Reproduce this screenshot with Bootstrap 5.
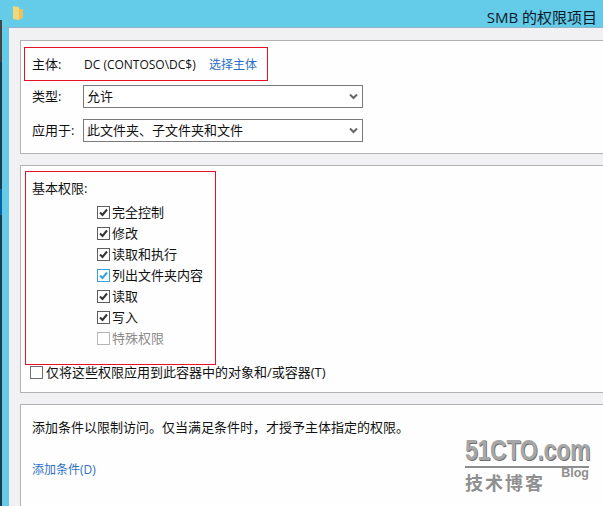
<!DOCTYPE html>
<html lang="zh"><head><meta charset="utf-8">
<link href="https://cdn.jsdelivr.net/npm/bootstrap@5.3.0/dist/css/bootstrap.min.css" rel="stylesheet">
<style>
html,body{height:506px;overflow:hidden}
body{background:#f1f0f2;color:#111;font:13px/17px "Open Sans","Noto Sans CJK SC",sans-serif}
.frame{height:506px;width:603px;position:relative;overflow:hidden;background:#64cbe9}
.edge{width:2px;flex:none;background:linear-gradient(#64cbe9 0 20px,#444 20px 62px,#1d3c50 62px 189px,#0a64a8 189px 215px,#1d3c50 215px)}
.rest{width:601px;flex:none}
.titlebar{height:28px;padding:5px 6px 0 10px;border-bottom:1px solid #8fb6c9}
.ttl{font-size:15px;line-height:24px;color:#0c1a2a}
.inner{margin-left:7px;height:478px;background:#f1f0f2;padding:12px 0 0 11px}
.pane{background:#fdfefd;border:1px solid #b2b2b2;border-right:0;margin-bottom:11px}
.p1{height:114px;padding:6px 0 0 3px}
.p2{height:228px;padding:5px 0 0 4px}
.p3{height:120px;padding:14px 0 0 11px}
.redbox{border:1px solid #e81123}
.rb1{width:244px;height:34px;padding-left:7px;white-space:nowrap}
.rb2{width:191px;height:194px;padding:8px 0 0 6px}
.lab{width:52px;white-space:nowrap}
.rb1 .who{font-size:12px;width:125px}
.lnk{color:#2d6fc7;text-decoration:none;font-size:12px}
.frow{height:23px;margin-top:4px;padding-left:8px}
.frow .lab{width:51px}
.frow + .frow{margin-top:11px}
.dd{width:280px;height:23px;border:1px solid #7a7a7a;padding:0 4px 1px 3px;background:#fff}
.perm{height:21px;padding-left:65px;gap:2px}
.perms{margin-top:5px}
.cb{width:13px;height:13px;border:1px solid #5e5e5e;background:#fff;flex:none}
.cb.off{border-color:#b5b5b5}
.cb.big{border-color:#6e6e6e}
.cb.blue{border-color:#35a3dd}
.muted{color:#8c8c8c}
.only{margin:0 0 0 5px;gap:3px;height:15px}
.gapt{margin-top:25px}
.mark1{position:absolute;left:465px;top:435px;width:124px;color:#a6a6a6;line-height:1}
.mk-a{font:700 30px/30px "Liberation Sans",sans-serif;letter-spacing:-.4px;height:31px;text-shadow:1px 1px 0 #6f6f6f;white-space:nowrap;transform:scaleX(.77);transform-origin:left top}
.mk-rule{height:2px;background:#8d8d8d}
.mk-b{font:700 18px/22px "Noto Sans CJK SC",sans-serif;letter-spacing:2px;margin-top:3px;white-space:nowrap;position:relative;color:#8f8f8f}
.mk-c{position:absolute;right:0;top:-5px;font:700 12.500px/14px "Liberation Sans",sans-serif;letter-spacing:0}
</style></head><body>
<div class="frame d-flex">
<div class="edge"></div>
<div class="rest">
<div class="titlebar d-flex justify-content-between">
<svg width="12" height="17" viewBox="0 0 12 17"><path d="M1 1 L7 2 V15 L1 14Z" fill="#f4d677"/><path d="M7 4 H11 V13 L7 15Z" fill="#e8c25f"/></svg>
<span class="ttl">SMB 的权限项目</span>
</div>
<div class="inner">
<div class="pane p1">
<div class="redbox rb1 d-flex align-items-center"><span class="lab">主体:</span><span class="who">DC (CONTOSO\DC$)</span><a class="lnk" href="#">选择主体</a></div>
<div class="frow d-flex align-items-center"><span class="lab">类型:</span><div class="dd d-flex align-items-center justify-content-between"><span>允许</span><svg width="9" height="7" viewBox="0 0 9 7"><path d="M1 1.5 L4.500 5 L8 1.500" fill="none" stroke="#666" stroke-width="2"/></svg></div></div>
<div class="frow d-flex align-items-center"><span class="lab">应用于:</span><div class="dd d-flex align-items-center justify-content-between"><span>此文件夹、子文件夹和文件</span><svg width="9" height="7" viewBox="0 0 9 7"><path d="M1 1.5 L4.500 5 L8 1.500" fill="none" stroke="#666" stroke-width="2"/></svg></div></div>
</div>
<div class="pane p2">
<div class="redbox rb2">
<div>基本权限:</div>
<div class="perms">
<div class="perm d-flex align-items-center"><span class="cb d-flex"><svg width="11" height="11" viewBox="0 0 11 11"><path d="M2 5.500 L4.500 8 L9 2.500" fill="none" stroke="#333" stroke-width="2"/></svg></span><span>完全控制</span></div>
<div class="perm d-flex align-items-center"><span class="cb d-flex"><svg width="11" height="11" viewBox="0 0 11 11"><path d="M2 5.500 L4.500 8 L9 2.500" fill="none" stroke="#333" stroke-width="2"/></svg></span><span>修改</span></div>
<div class="perm d-flex align-items-center"><span class="cb d-flex"><svg width="11" height="11" viewBox="0 0 11 11"><path d="M2 5.500 L4.500 8 L9 2.500" fill="none" stroke="#333" stroke-width="2"/></svg></span><span>读取和执行</span></div>
<div class="perm d-flex align-items-center"><span class="cb blue d-flex"><svg width="11" height="11" viewBox="0 0 11 11"><path d="M2 5.500 L4.500 8 L9 2.500" fill="none" stroke="#35a3dd" stroke-width="2"/></svg></span><span>列出文件夹内容</span></div>
<div class="perm d-flex align-items-center"><span class="cb d-flex"><svg width="11" height="11" viewBox="0 0 11 11"><path d="M2 5.500 L4.500 8 L9 2.500" fill="none" stroke="#333" stroke-width="2"/></svg></span><span>读取</span></div>
<div class="perm d-flex align-items-center"><span class="cb d-flex"><svg width="11" height="11" viewBox="0 0 11 11"><path d="M2 5.500 L4.500 8 L9 2.500" fill="none" stroke="#333" stroke-width="2"/></svg></span><span>写入</span></div>
<div class="perm d-flex align-items-center"><span class="cb off"></span><span class="muted">特殊权限</span></div>
</div>
</div>
<div class="only d-flex align-items-center"><span class="cb big"></span><span>仅将这些权限应用到此容器中的对象和/或容器(T)</span></div>
</div>
<div class="pane p3">
<div>添加条件以限制访问。仅当满足条件时，才授予主体指定的权限。</div>
<div class="gapt"><a class="lnk" href="#">添加条件(D)</a></div>
</div>
</div>
</div>
<div class="mark1"><div class="mk-a">51CTO.com</div><div class="mk-rule"></div><div class="mk-b">技术博客<span class="mk-c">Blog</span></div></div>
</div>
</body></html>
